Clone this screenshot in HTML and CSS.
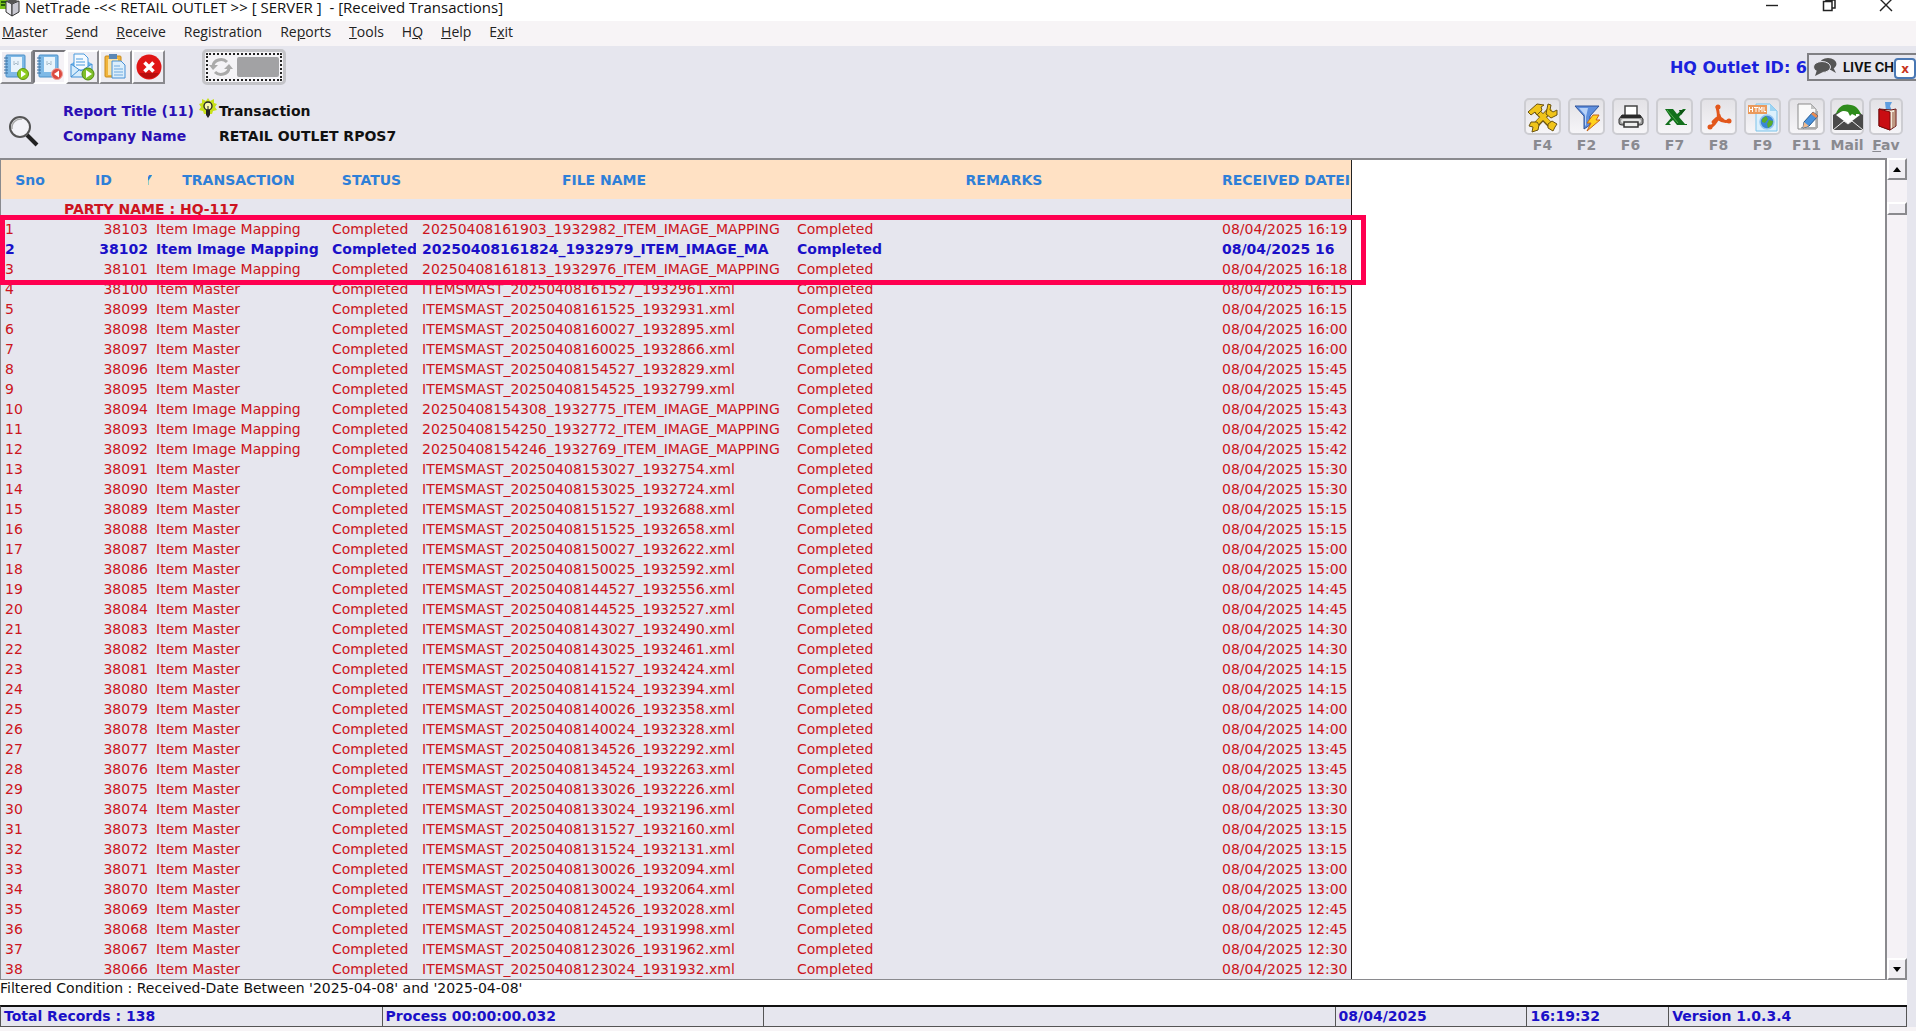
FILE: index.html
```html
<!DOCTYPE html>
<html lang="en">
<head>
<meta charset="utf-8">
<title>NetTrade - Received Transactions</title>
<link rel="stylesheet" href="styles.css">
</head>
<body>
<header class="titlebar">
  <svg class="app-icon" viewBox="0 0 20 17" width="20" height="17"><path d="M0 0h8v9H0z" fill="#7ac41c"/><path d="M1 2h6M1 5h4" stroke="#245c10" stroke-width="2"/><path d="M6 1l6 3v12l-6-4z" fill="#e8e8ee" stroke="#333"/><path d="M12 4l7-3v11l-7 4z" fill="#c9c9d2" stroke="#333"/><path d="M6 1l6-2 7 2-7 3z" fill="#555"/></svg>
  <h1 class="title">NetTrade -&lt;&lt; RETAIL OUTLET &gt;&gt; [ SERVER ]&nbsp; - [Received Transactions]</h1>
  <div class="window-controls">
    <button aria-label="Minimize"><svg viewBox="0 0 14 14" width="14" height="14"><path d="M1 5.500h12" stroke="#222" stroke-width="1.400"/></svg></button>
    <button aria-label="Restore"><svg viewBox="0 0 14 14" width="14" height="14"><path d="M4 1V0h9v8h-3M1.500 1.500h8.500v9h-8.500z" fill="none" stroke="#222" stroke-width="1.500"/></svg></button>
    <button aria-label="Close"><svg viewBox="0 0 14 14" width="14" height="14"><path d="M1-1l12 12M13-1L1 11" stroke="#222" stroke-width="1.400"/></svg></button>
  </div>
</header>

<nav class="menubar">
  <a href="#"><u>M</u>aster</a>
  <a href="#"><u>S</u>end</a>
  <a href="#"><u>R</u>eceive</a>
  <a href="#">Re<u>g</u>istration</a>
  <a href="#">Re<u>p</u>orts</a>
  <a href="#"><u>T</u>ools</a>
  <a href="#">H<u>Q</u></a>
  <a href="#"><u>H</u>elp</a>
  <a href="#">E<u>x</u>it</a>
</nav>

<section class="toolbar">
  <div class="tool-group">
    <button class="tool" aria-label="Sent transactions"><svg viewBox="0 0 28 28" width="28" height="28"><rect x="3" y="2" width="19" height="22" rx="1" fill="#7fb9e6" stroke="#4a8fc8"/><rect x="8" y="4" width="11" height="15" fill="#e9f4fc"/><path d="M11 8v4l2-2 2 2V8" fill="none" stroke="#a9bdcb"/><path d="M1 5h4M1 8h4M1 11h4M1 14h4M1 17h4M1 20h4" stroke="#3d6f9e"/><circle cx="20" cy="21" r="5.500" fill="#8ecb1f" stroke="#5f9410"/><path d="M18 17.500l5 3.500-5 3.500z" fill="#fff"/></svg></button>
    <button class="tool pressed" aria-label="Received transactions"><svg viewBox="0 0 28 28" width="28" height="28"><rect x="3" y="2" width="19" height="22" rx="1" fill="#7fb9e6" stroke="#4a8fc8"/><rect x="8" y="4" width="11" height="15" fill="#e9f4fc"/><path d="M11 8v4l2-2 2 2V8" fill="none" stroke="#a9bdcb"/><path d="M1 5h4M1 8h4M1 11h4M1 14h4M1 17h4M1 20h4" stroke="#3d6f9e"/><circle cx="21" cy="21" r="5.500" fill="#dc4a40" stroke="#f0a29c"/><path d="M23 17.500L18 21l5 3.500z" fill="#fff"/></svg></button>
    <button class="tool" aria-label="Send mail"><svg viewBox="0 0 28 28" width="28" height="28"><path d="M2 11L12 4l11 7v13H2z" fill="#6fb4ea"/><path d="M5 1h10l4 4v12H5z" fill="#f4faff" stroke="#4a9ade"/><path d="M7 6h7M7 9h9M7 12h9" stroke="#4a9ade"/><path d="M2 11l10 7 11-7v13H2z" fill="#d5ebfb" stroke="#3f8fd6"/><path d="M2 24l8-7M23 24l-8-7" stroke="#3f8fd6"/><circle cx="19" cy="21" r="6" fill="#7fbf2a" stroke="#4f8a10"/><path d="M17 17l6 4-6 4z" fill="#fff"/></svg></button>
    <button class="tool" aria-label="Paste"><svg viewBox="0 0 28 28" width="28" height="28"><rect x="3" y="3" width="16" height="21" rx="1" fill="#f1b53c" stroke="#c98a1b"/><path d="M7 1h8v5H7z" fill="#5a87b5"/><path d="M6 6h10v16H6z" fill="#fbe3a8"/><path d="M10 8h9l4 4v13H10z" fill="#dceefb" stroke="#4690d6"/><path d="M12 13h6M12 16h9M12 19h9M12 22h9" stroke="#6ea9df"/></svg></button>
    <button class="tool" aria-label="Close report"><svg viewBox="0 0 28 28" width="28" height="28"><circle cx="14" cy="14" r="12.500" fill="#e01616"/><path d="M4 20a12 12 0 0 0 20 0z" fill="#b80d0d"/><path d="M9.500 9.500l9 9M18.500 9.500l-9 9" stroke="#fff" stroke-width="3.600"/></svg></button>
  </div>
  <button class="refresh" aria-label="Auto refresh">
    <svg viewBox="0 0 24 20" width="24" height="20"><path d="M4 9a8 7 0 0 1 14-4M20 11a8 7 0 0 1-14 4" fill="none" stroke="#aaa" stroke-width="3"/><path d="M0 8h9l-5 5zM15 12h9l-4-5z" fill="#aaa"/></svg>
    <span class="refresh-bar"></span>
  </button>
  <p class="outlet">HQ Outlet ID: 6</p>
  <div class="chat">
    <button class="chat-open"><svg viewBox="0 0 24 20" width="24" height="20"><ellipse cx="15" cy="7" rx="8.500" ry="6" fill="#555"/><path d="M20 10l3 6-7-4z" fill="#555"/><ellipse cx="9" cy="10" rx="8.500" ry="5.500" fill="#555" stroke="#e6e6ee"/><path d="M4 13l-2 6 8-4z" fill="#555"/></svg>LIVE CHAT</button>
    <button class="chat-close">x</button>
  </div>
</section>

<section class="report-head">
  <svg class="search-icon" viewBox="0 0 32 32" width="32" height="32"><path d="M19 20l10 10" stroke="#222" stroke-width="4"/><circle cx="12" cy="12" r="10" fill="#f3f3f8" stroke="#555" stroke-width="2"/><path d="M4 14a9 9 0 0 1 10-10" fill="none" stroke="#aaa" stroke-width="1.500"/></svg>
  <dl class="report-info">
    <dt>Report Title (11)</dt>
    <dd><svg class="bulb" viewBox="0 0 18 20" width="18" height="20"><path d="M9 0l2 3 4-2v4l3 1-2 3 2 3-4 1-1 3H5l-1-3-4-1 2-3-2-3 3-1V1l4 2z" fill="#c8e01a"/><circle cx="9" cy="8" r="4" fill="#fbfbb0" stroke="#222" stroke-width="1.300"/><path d="M9 8v4" stroke="#222"/><path d="M7 12h4v5l-2 3-2-3z" fill="#222"/></svg>Transaction</dd>
    <dt>Company Name</dt>
    <dd>RETAIL OUTLET RPOS7</dd>
  </dl>
  <div class="actions">
    <button class="action"><span class="face"><svg viewBox="0 0 32 32" width="32" height="32"><path d="M9 9l17 18" stroke="#6b5414" stroke-width="6"/><path d="M23 9L7 26" stroke="#6b5414" stroke-width="6"/><path d="M9 9l17 17M24 8L7 25" stroke="#f0c419" stroke-width="4"/><path d="M1 11l9-8 7 1-3 2 1 3-5 5-2-3-4 3z" fill="#f0c419" stroke="#6b5414"/><path d="M21 3l3 1-1 5 3 2 4-2v5l-6 3-5-4zM4 21l6 0 2 3-1 5-6 2 1-5-4-1z" fill="#f0c419" stroke="#6b5414"/><path d="M21 23l4-3 5 3-2 3-2 4-5-3z" fill="#f0c419" stroke="#6b5414"/></svg></span>F4</button>
    <button class="action"><span class="face"><svg viewBox="0 0 32 32" width="32" height="32"><path d="M4 5h24l-9 10v9l-6 4V15z" fill="#5f8fdd" stroke="#2f5299"/><path d="M8 7h9l-2 9v8l-1 1V14z" fill="#b8d2f8"/><path d="M22 14h6l-3 5h4L16 30l4-8h-4z" fill="#ffd21e" stroke="#c7641b"/></svg></span>F2</button>
    <button class="action"><span class="face"><svg viewBox="0 0 32 32" width="32" height="32"><path d="M10 5h12v10H10z" fill="#fff" stroke="#444" stroke-width="1.500"/><path d="M7 14h18l3 4v4q0 2-3 2H7q-3 0-3-2v-4z" fill="#9a9a9a" stroke="#333"/><path d="M7 14h18l2 3H5z" fill="#2a2a2a"/><rect x="6" y="18" width="20" height="4" rx="2" fill="#e6e6e6"/><path d="M9 21h14v5H9z" fill="#eee" stroke="#333" stroke-width="1.500"/></svg></span>F6</button>
    <button class="action"><span class="face"><svg viewBox="0 0 32 32" width="32" height="32"><path d="M6 8h8l4 5 6-5h3l-7 8 6 7h2v1H18l-4-5-4 3 2 2H6l6-7z" fill="#12701c"/><path d="M8 9l11 13" stroke="#4fae4c" stroke-width="1"/><path d="M20 9h6l-4 5" fill="#0c5413"/></svg></span>F7</button>
    <button class="action"><span class="face"><svg viewBox="0 0 32 32" width="32" height="32"><path d="M14 6c1 4 2 8 1 11-2 4-5 8-8 9M15 17c3 3 7 4 11 3M15 17c-2 0-3 2-5 4M16 14c0 2 2 4 4 5" fill="none" stroke="#e2571c" stroke-width="3" stroke-linecap="round"/><circle cx="15" cy="6" r="2.500" fill="#e2571c"/><circle cx="7" cy="26" r="2.500" fill="#e2571c"/><circle cx="26" cy="20" r="2.500" fill="#e2571c"/></svg></span>F8</button>
    <button class="action"><span class="face"><svg viewBox="0 0 32 32" width="32" height="32"><path d="M9 3h14l7 7v20H9z" fill="#dcf0fc" stroke="#7cc3ea"/><path d="M23 3v7h7z" fill="#9fd5f3"/><path d="M1 4h19v9H1z" fill="#ea9a5c"/><path d="M2.500 6v5M5.500 6v5M2.500 8.500h3M7 6.500h4M9 6v5M12 11V6l1.500 3L15 6v5M17 6v4.500h2" stroke="#fff" fill="none"/><circle cx="20" cy="21" r="7" fill="#3a86d8" stroke="#9ac8f0" stroke-width="1.500"/><path d="M15 18l4-3 2 3-3 4-3-1zM22 19l4 1-1 4-4 3-1-4z" fill="#58ad2c"/></svg></span>F9</button>
    <button class="action"><span class="face"><svg viewBox="0 0 32 32" width="32" height="32"><path d="M7 3h13l5 5v20H7z" fill="#fafafa" stroke="#8a8a8a"/><path d="M20 3v5h5z" fill="#c4c4c4"/><path d="M10 27h16M26 10v17" stroke="#aaa" stroke-width="2"/><path d="M13 21l9-10 5 4-9 10-6 2z" fill="#4a93dd" stroke="#23588f"/><path d="M13 21l5 4-6 2z" fill="#f1b98b"/><path d="M20 13l5 4 2-2-5-4z" fill="#e98a50"/></svg></span>F11</button>
    <button class="action narrow"><span class="face"><svg viewBox="0 0 32 32" width="32" height="32"><path d="M1 14L16 5l15 9v15H1z" fill="#4a4a4a"/><path d="M4 14l12-8 12 8-12 9z" fill="#fff"/><path d="M1 29l11-9 4 3 4-3 11 9" fill="#4a4a4a" stroke="#eee"/><path d="M4 13C6 5 13 2 19 4c6 1 8 5 10 9h-5v2l-4-2-2 2-2-4c-4-2-8-1-12 2z" fill="#2f8c1c"/></svg></span>Mail</button>
    <button class="action narrow"><span class="face"><svg viewBox="0 0 32 32" width="32" height="32"><path d="M14 1h7l-2 4 2 5h-6z" fill="#5f9ee0"/><path d="M8 8l12 1 5-1v17l-6 4-11-4z" fill="#f3e8d8" stroke="#6a1010"/><path d="M8 8l11 3v18L8 25z" fill="#c90d12" stroke="#7a0a0a"/><path d="M22 11v16M24 9v16" stroke="#8a4a30"/></svg></span><span><u>F</u>av</span></button>
  </div>
</section>

<main class="report">
  <div class="grid-row">
    <div class="grid">
      <table class="data">
        <colgroup><col class="c-sno"><col class="c-id"><col class="c-party"><col class="c-trans"><col class="c-status"><col class="c-file"><col class="c-remarks"><col class="c-date"></colgroup>
        <thead><tr><th>Sno</th><th>ID</th><th class="sliver">PARTY</th><th>TRANSACTION</th><th>STATUS</th><th>FILE NAME</th><th>REMARKS</th><th class="left">RECEIVED DATEI</th></tr></thead>
        <tbody>
          <tr class="group"><td></td><td colspan="7">PARTY NAME : HQ-117</td></tr>
          <tr><td>1<td>38103<td><td>Item Image Mapping<td>Completed<td>20250408161903_1932982_ITEM_IMAGE_MAPPING<td>Completed<td>08/04/2025 16:19</tr>
          <tr class="current"><td>2<td>38102<td><td>Item Image Mapping<td>Completed<td>20250408161824_1932979_ITEM_IMAGE_MA<td>Completed<td>08/04/2025 16</tr>
          <tr><td>3<td>38101<td><td>Item Image Mapping<td>Completed<td>20250408161813_1932976_ITEM_IMAGE_MAPPING<td>Completed<td>08/04/2025 16:18</tr>
          <tr><td>4<td>38100<td><td>Item Master<td>Completed<td>ITEMSMAST_20250408161527_1932961.xml<td>Completed<td>08/04/2025 16:15</tr>
          <tr><td>5<td>38099<td><td>Item Master<td>Completed<td>ITEMSMAST_20250408161525_1932931.xml<td>Completed<td>08/04/2025 16:15</tr>
          <tr><td>6<td>38098<td><td>Item Master<td>Completed<td>ITEMSMAST_20250408160027_1932895.xml<td>Completed<td>08/04/2025 16:00</tr>
          <tr><td>7<td>38097<td><td>Item Master<td>Completed<td>ITEMSMAST_20250408160025_1932866.xml<td>Completed<td>08/04/2025 16:00</tr>
          <tr><td>8<td>38096<td><td>Item Master<td>Completed<td>ITEMSMAST_20250408154527_1932829.xml<td>Completed<td>08/04/2025 15:45</tr>
          <tr><td>9<td>38095<td><td>Item Master<td>Completed<td>ITEMSMAST_20250408154525_1932799.xml<td>Completed<td>08/04/2025 15:45</tr>
          <tr><td>10<td>38094<td><td>Item Image Mapping<td>Completed<td>20250408154308_1932775_ITEM_IMAGE_MAPPING<td>Completed<td>08/04/2025 15:43</tr>
          <tr><td>11<td>38093<td><td>Item Image Mapping<td>Completed<td>20250408154250_1932772_ITEM_IMAGE_MAPPING<td>Completed<td>08/04/2025 15:42</tr>
          <tr><td>12<td>38092<td><td>Item Image Mapping<td>Completed<td>20250408154246_1932769_ITEM_IMAGE_MAPPING<td>Completed<td>08/04/2025 15:42</tr>
          <tr><td>13<td>38091<td><td>Item Master<td>Completed<td>ITEMSMAST_20250408153027_1932754.xml<td>Completed<td>08/04/2025 15:30</tr>
          <tr><td>14<td>38090<td><td>Item Master<td>Completed<td>ITEMSMAST_20250408153025_1932724.xml<td>Completed<td>08/04/2025 15:30</tr>
          <tr><td>15<td>38089<td><td>Item Master<td>Completed<td>ITEMSMAST_20250408151527_1932688.xml<td>Completed<td>08/04/2025 15:15</tr>
          <tr><td>16<td>38088<td><td>Item Master<td>Completed<td>ITEMSMAST_20250408151525_1932658.xml<td>Completed<td>08/04/2025 15:15</tr>
          <tr><td>17<td>38087<td><td>Item Master<td>Completed<td>ITEMSMAST_20250408150027_1932622.xml<td>Completed<td>08/04/2025 15:00</tr>
          <tr><td>18<td>38086<td><td>Item Master<td>Completed<td>ITEMSMAST_20250408150025_1932592.xml<td>Completed<td>08/04/2025 15:00</tr>
          <tr><td>19<td>38085<td><td>Item Master<td>Completed<td>ITEMSMAST_20250408144527_1932556.xml<td>Completed<td>08/04/2025 14:45</tr>
          <tr><td>20<td>38084<td><td>Item Master<td>Completed<td>ITEMSMAST_20250408144525_1932527.xml<td>Completed<td>08/04/2025 14:45</tr>
          <tr><td>21<td>38083<td><td>Item Master<td>Completed<td>ITEMSMAST_20250408143027_1932490.xml<td>Completed<td>08/04/2025 14:30</tr>
          <tr><td>22<td>38082<td><td>Item Master<td>Completed<td>ITEMSMAST_20250408143025_1932461.xml<td>Completed<td>08/04/2025 14:30</tr>
          <tr><td>23<td>38081<td><td>Item Master<td>Completed<td>ITEMSMAST_20250408141527_1932424.xml<td>Completed<td>08/04/2025 14:15</tr>
          <tr><td>24<td>38080<td><td>Item Master<td>Completed<td>ITEMSMAST_20250408141524_1932394.xml<td>Completed<td>08/04/2025 14:15</tr>
          <tr><td>25<td>38079<td><td>Item Master<td>Completed<td>ITEMSMAST_20250408140026_1932358.xml<td>Completed<td>08/04/2025 14:00</tr>
          <tr><td>26<td>38078<td><td>Item Master<td>Completed<td>ITEMSMAST_20250408140024_1932328.xml<td>Completed<td>08/04/2025 14:00</tr>
          <tr><td>27<td>38077<td><td>Item Master<td>Completed<td>ITEMSMAST_20250408134526_1932292.xml<td>Completed<td>08/04/2025 13:45</tr>
          <tr><td>28<td>38076<td><td>Item Master<td>Completed<td>ITEMSMAST_20250408134524_1932263.xml<td>Completed<td>08/04/2025 13:45</tr>
          <tr><td>29<td>38075<td><td>Item Master<td>Completed<td>ITEMSMAST_20250408133026_1932226.xml<td>Completed<td>08/04/2025 13:30</tr>
          <tr><td>30<td>38074<td><td>Item Master<td>Completed<td>ITEMSMAST_20250408133024_1932196.xml<td>Completed<td>08/04/2025 13:30</tr>
          <tr><td>31<td>38073<td><td>Item Master<td>Completed<td>ITEMSMAST_20250408131527_1932160.xml<td>Completed<td>08/04/2025 13:15</tr>
          <tr><td>32<td>38072<td><td>Item Master<td>Completed<td>ITEMSMAST_20250408131524_1932131.xml<td>Completed<td>08/04/2025 13:15</tr>
          <tr><td>33<td>38071<td><td>Item Master<td>Completed<td>ITEMSMAST_20250408130026_1932094.xml<td>Completed<td>08/04/2025 13:00</tr>
          <tr><td>34<td>38070<td><td>Item Master<td>Completed<td>ITEMSMAST_20250408130024_1932064.xml<td>Completed<td>08/04/2025 13:00</tr>
          <tr><td>35<td>38069<td><td>Item Master<td>Completed<td>ITEMSMAST_20250408124526_1932028.xml<td>Completed<td>08/04/2025 12:45</tr>
          <tr><td>36<td>38068<td><td>Item Master<td>Completed<td>ITEMSMAST_20250408124524_1931998.xml<td>Completed<td>08/04/2025 12:45</tr>
          <tr><td>37<td>38067<td><td>Item Master<td>Completed<td>ITEMSMAST_20250408123026_1931962.xml<td>Completed<td>08/04/2025 12:30</tr>
          <tr><td>38<td>38066<td><td>Item Master<td>Completed<td>ITEMSMAST_20250408123024_1931932.xml<td>Completed<td>08/04/2025 12:30</tr>
        </tbody>
      </table>
      <div class="highlight"></div>
    </div>
    <div class="scrollbar">
      <button aria-label="Scroll up"><svg viewBox="0 0 8 5" width="8" height="5"><path d="M0 5l4-5 4 5z"/></svg></button>
      <div class="thumb"></div>
      <button class="down" aria-label="Scroll down"><svg viewBox="0 0 8 5" width="8" height="5"><path d="M0 0l4 5 4-5z"/></svg></button>
    </div>
  </div>
  <p class="filter">Filtered Condition : Received-Date Between '2025-04-08' and '2025-04-08'</p>
  <footer class="statusbar">
    <span>Total Records : 138</span>
    <span>Process 00:00:00.032</span>
    <span></span>
    <span>08/04/2025</span>
    <span>16:19:32</span>
    <span>Version 1.0.3.4</span>
  </footer>
</main>
</body>
</html>
```
FILE: styles.css
```css
* { box-sizing: border-box; }
body {
  margin: 0;
  min-height: 100vh;
  background: #f7f4f6;
  font-family: "DejaVu Sans", Verdana, sans-serif;
  font-size: 14px;
  color: #111;
}
h1, p, dl, dd { margin: 0; }
button {
  padding: 0;
  border: 0;
  background: none;
  font: inherit;
  color: inherit;
}
svg { display: block; }

/* Title bar */
.titlebar {
  display: flex;
  align-items: flex-start;
  height: 21px;
  background: #fff;
  overflow: hidden;
}
.app-icon { margin-right: 5px; }
.title {
  font: 15px/14px "Open Sans", "Segoe UI", sans-serif;
  white-space: nowrap;
}
.window-controls {
  display: flex;
  gap: 43px;
  margin-left: auto;
  padding-right: 23px;
}

/* Menu */
.menubar {
  display: flex;
  gap: 18px;
  height: 25px;
  padding-left: 2px;
  font: 14px/22px "Open Sans", "Segoe UI", sans-serif;
}
.menubar a { color: #222; text-decoration: none; }

/* Toolbar */
.toolbar {
  display: flex;
  align-items: flex-start;
  height: 47px;
  padding-top: 3px;
  background: #e6e6ee;
}
.tool-group { display: flex; margin-top: 1px; }
.tool {
  display: grid;
  place-items: center;
  width: 33px;
  height: 34px;
  border: 2px solid;
  border-color: #fff #8a8a8e #8a8a8e #fff;
  background: #eeedf2;
  overflow: hidden;
}
.tool.pressed {
  border-color: #77777c #fff #fff #77777c;
  background: #f5f3f7;
}
.refresh {
  display: flex;
  align-items: center;
  justify-content: center;
  gap: 4px;
  width: 84px;
  height: 36px;
  margin-left: 37px;
  border: 3px solid #c4c4c8;
  border-radius: 5px;
  background: #f4f3f6;
  outline: 2px dotted #222;
  outline-offset: -6px;
}
.refresh-bar {
  width: 42px;
  height: 20px;
  border-radius: 2px;
  background: #a2a2a4;
}
.outlet {
  margin-left: auto;
  font-weight: bold;
  font-size: 16px;
  line-height: 38px;
  color: #1a22dd;
}
.chat {
  position: relative;
  width: 109px;
  height: 28px;
  margin-top: 4px;
  border: 2px solid #808084;
  border-right: 0;
  overflow: hidden;
}
.chat-open {
  display: flex;
  align-items: center;
  gap: 6px;
  height: 24px;
  padding-left: 4px;
  font: bold 13px Inter, "Liberation Sans", sans-serif;
  white-space: nowrap;
}
.chat-close {
  position: absolute;
  top: 3px;
  right: 0;
  width: 22px;
  height: 21px;
  border: 2px solid #4a78b4;
  border-radius: 4px;
  background: #fff;
  font-weight: bold;
  font-size: 12px;
  line-height: 14px;
  color: #c8331c;
}

/* Report heading */
.report-head {
  display: flex;
  align-items: flex-start;
  height: 65px;
  background: #e6e6ee;
}
.search-icon { margin: 22px 23px 0 8px; }
.report-info {
  display: grid;
  grid-template-columns: 156px auto;
  padding-top: 6px;
  font-weight: bold;
  font-size: 14px;
  line-height: 25px;
  white-space: nowrap;
}
.report-info dt { color: #2a0fb4; }
.report-info dd { position: relative; }
.bulb { position: absolute; top: -1px; left: -20px; }
.actions {
  display: flex;
  gap: 7px;
  margin-left: auto;
  padding: 5px 13px 0 0;
}
.action {
  display: flex;
  flex-direction: column;
  align-items: center;
  width: 37px;
  font-weight: bold;
  font-size: 14px;
  line-height: 20px;
  color: #8a8a90;
}
.action.narrow { width: 34px; margin-left: -2px; }
.face {
  display: grid;
  place-items: center;
  width: 100%;
  height: 37px;
  border: 2px solid #cdcdd2;
  border-radius: 5px;
  background: linear-gradient(#e3e2e6, #f6f5f8);
}

/* Grid */
.report {
  margin-right: 9px;
  background: #fff;
  box-shadow: 9px 0 #e6e6ee;
}
.grid-row { display: flex; }
.grid {
  position: relative;
  flex: 1;
  min-width: 0;
  border: solid #8a8a8e;
  border-width: 2px 2px 1px 1px;
}
.data {
  width: 1351px;
  table-layout: fixed;
  border-collapse: separate;
  border-spacing: 0;
  border-right: 1px solid #222;
  background: #e6e6ee;
  color: #cc1420;
}
.c-sno { width: 61px; }
.c-id { width: 86px; }
.c-party { width: 4px; }
.c-trans { width: 176px; }
.c-status { width: 90px; }
.c-file { width: 375px; }
.c-remarks { width: 425px; }
.c-date { width: 133px; }
.data td, .data th {
  padding: 0;
  overflow: hidden;
  white-space: nowrap;
}
.data th {
  height: 39px;
  padding-right: 3px;
  background: #ffe1c4;
  color: #2e7fd8;
}
.data th.left { padding: 0 0 0 4px; text-align: left; }
.data th.sliver { padding: 0; direction: rtl; text-align: right; }
.data td {
  height: 20px;
  line-height: 20px;
  border: solid transparent;
  border-width: 0 2px 0 4px;
}
.data td:nth-child(3) { border-width: 0; }
.data td:nth-child(2) { border-width: 0; text-align: right; }
.data .group td { border-left-width: 2px; font-weight: bold; text-align: left; }
.data .current { font-weight: bold; color: #1a10c8; }
.highlight {
  position: absolute;
  top: 55px;
  left: -1px;
  width: 1366px;
  height: 70px;
  border: 5px solid #ff0050;
}

/* Scroll bar */
.scrollbar {
  display: flex;
  flex-direction: column;
  width: 20px;
  background: #f5f2f6;
}
.scrollbar button {
  display: grid;
  place-items: center;
  height: 22px;
}
.scrollbar button, .thumb {
  border: 2px solid;
  border-color: #fff #8a8a8e #8a8a8e #fff;
  background: #f0eef3;
}
.thumb { height: 13px; margin-top: 22px; }
.scrollbar .down { margin-top: auto; }

/* Footer */
.filter {
  height: 25px;
  line-height: 16px;
}
.statusbar {
  display: grid;
  grid-template-columns: 382fr 382fr 572fr 192fr 142fr 238fr;
  height: 22px;
  border-top: 2px solid #111;
  border-left: 1px solid #555;
  background: #e6e6ee;
  font-weight: bold;
  line-height: 19px;
  color: #1a10c8;
}
.statusbar span {
  padding-left: 3px;
  border: solid #555;
  border-width: 0 1px 1px 0;
}
```
